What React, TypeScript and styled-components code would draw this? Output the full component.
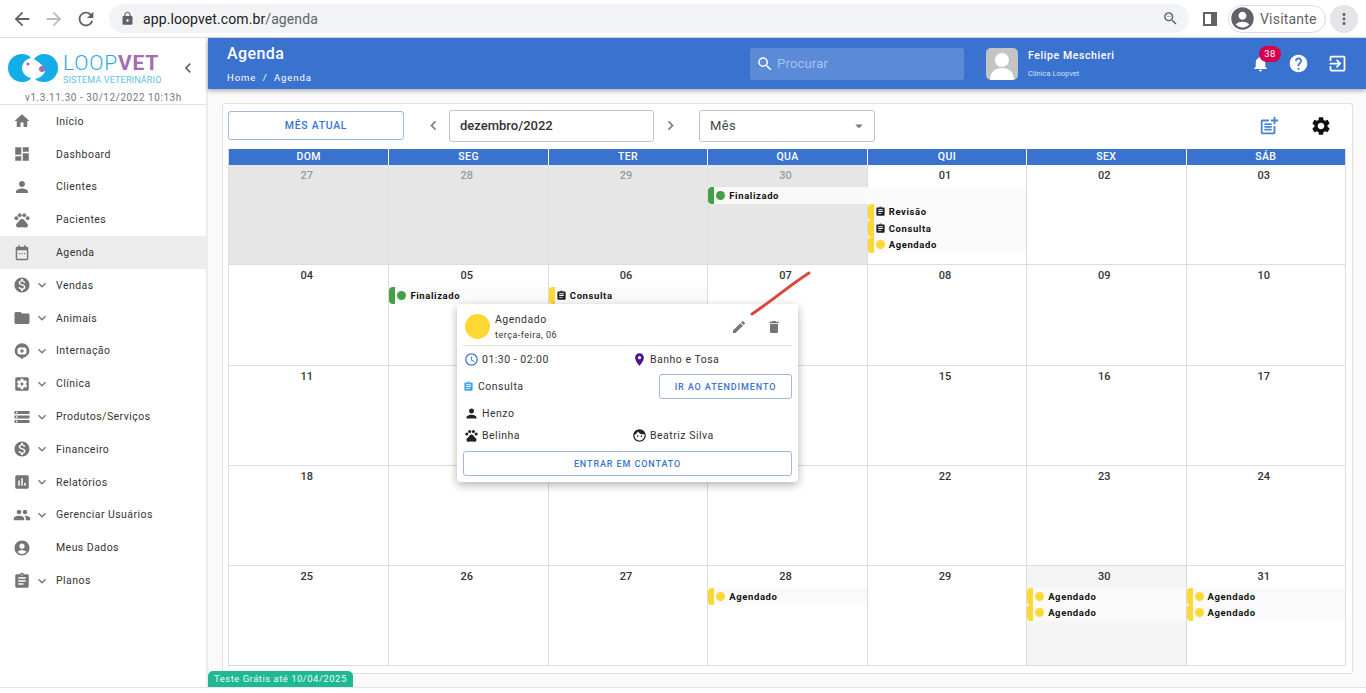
import React from 'react';
import styled, { createGlobalStyle } from 'styled-components';
import {
	MdHome, MdDashboard, MdPerson, MdPets, MdMonetizationOn, MdFolder, MdSettingsApplications,
	MdStorage, MdAssessment, MdPeople, MdAccountCircle, MdAssignment, MdExpandMore, MdChevronLeft,
	MdChevronRight, MdNotifications, MdHelp, MdPostAdd, MdSettings, MdEdit, MdDelete, MdAccessTime,
	MdPlace, MdSearch, MdLock, MdArrowBack, MdArrowForward, MdRefresh, MdZoomOut, MdMoreVert, MdFace,
	MdArrowDropDown, MdOutlineExitToApp,
} from 'react-icons/md';

const BLUE = '#3a73cf';

const GlobalStyle = createGlobalStyle`
	html, body { margin: 0; padding: 0; background: #fff; }
	body { font-family: Roboto, "Liberation Sans", sans-serif; color: #333; overflow: hidden; }
	* { box-sizing: border-box; }
`;

// a pin with a cross, the package has no such icon
const InternacaoIcon = () => (
	<svg width="20" height="20" viewBox="0 0 20 20">
		<path d="M10 1.5a8 8 0 0 1 1.4 15.9L10 19.5l-1.4-2.1A8 8 0 0 1 10 1.5z" fill="#757575" />
		<rect x="5" y="6" width="10" height="8" rx="2.5" fill="#fff" />
		<path d="M9.2 8h1.6v1.2H12v1.6h-1.2V12H9.2v-1.2H8V9.2h1.2z" fill="#757575" />
	</svg>
);

const AgendaIcon = () => (
	<svg width="20" height="20" viewBox="0 0 20 20">
		<path d="M6 1.5h1.6V3h4.8V1.5H14V3h1.5A1.5 1.5 0 0 1 17 4.5v12a1.5 1.5 0 0 1-1.5 1.5h-11A1.5 1.5 0 0 1 3 16.500v-12A1.500 1.500 0 0 1 4.500 3H6z" fill="#757575" />
		<rect x="4.600" y="7" width="10.800" height="9.400" fill="#ececec" />
		<path d="M6.500 10h1.400v1.400H6.500zM9.300 10h1.400v1.400H9.300zM12.100 10h1.400v1.400h-1.400z" fill="#757575" />
	</svg>
);

const Logo = () => (
	<svg width="50" height="28" viewBox="0 0 50 28">
		<path d="M14 0A14 14 0 1 0 14 28C19 28 22 26 23 24C18 23 14 19 14 14C14 9 18 5 23 4C21 1 18 0 14 0z" fill="#13aee8" />
		<path d="M36 0A14 14 0 1 1 36 28C32 28 29 27 27 25C32 24 36 21 37 17C36 12 31 8 26 5C28 2 32 0 36 0z" fill="#13aee8" />
		<circle cx="34" cy="15" r="3" fill="#a56cb0" />
		<circle cx="20" cy="10" r="1.6" fill="#a56cb0" />
	</svg>
);

const menu = [
	{ label: 'Início', icon: <MdHome /> },
	{ label: 'Dashboard', icon: <MdDashboard /> },
	{ label: 'Clientes', icon: <MdPerson /> },
	{ label: 'Pacientes', icon: <MdPets /> },
	{ label: 'Agenda', icon: <AgendaIcon />, active: true },
	{ label: 'Vendas', icon: <MdMonetizationOn />, more: true },
	{ label: 'Animais', icon: <MdFolder />, more: true },
	{ label: 'Internação', icon: <InternacaoIcon />, more: true },
	{ label: 'Clínica', icon: <MdSettingsApplications />, more: true },
	{ label: 'Produtos/Serviços', icon: <MdStorage />, more: true },
	{ label: 'Financeiro', icon: <MdMonetizationOn />, more: true },
	{ label: 'Relatórios', icon: <MdAssessment />, more: true },
	{ label: 'Gerenciar Usuários', icon: <MdPeople />, more: true },
	{ label: 'Meus Dados', icon: <MdAccountCircle /> },
	{ label: 'Planos', icon: <MdAssignment />, more: true },
];

type Ev = { col: number; row: number; span?: number; label: string; kind: 'green' | 'yellow' | 'doc' };
type Week = { days: string[]; muted?: number; today?: number; events: Ev[] };

const weeks: Week[] = [
	{
		days: ['27', '28', '29', '30', '01', '02', '03'],
		muted: 4,
		events: [
			{ col: 4, row: 2, span: 2, label: 'Finalizado', kind: 'green' },
			{ col: 5, row: 3, label: 'Revisão', kind: 'doc' },
			{ col: 5, row: 4, label: 'Consulta', kind: 'doc' },
			{ col: 5, row: 5, label: 'Agendado', kind: 'yellow' },
		],
	},
	{
		days: ['04', '05', '06', '07', '08', '09', '10'],
		events: [
			{ col: 2, row: 2, label: 'Finalizado', kind: 'green' },
			{ col: 3, row: 2, label: 'Consulta', kind: 'doc' },
		],
	},
	{ days: ['11', '12', '13', '14', '15', '16', '17'], events: [] },
	{ days: ['18', '19', '20', '21', '22', '23', '24'], events: [] },
	{
		days: ['25', '26', '27', '28', '29', '30', '31'],
		today: 5,
		events: [
			{ col: 4, row: 2, label: 'Agendado', kind: 'yellow' },
			{ col: 6, row: 2, label: 'Agendado', kind: 'yellow' },
			{ col: 6, row: 3, label: 'Agendado', kind: 'yellow' },
			{ col: 7, row: 2, label: 'Agendado', kind: 'yellow' },
			{ col: 7, row: 3, label: 'Agendado', kind: 'yellow' },
		],
	},
];

const weekDays = ['DOM', 'SEG', 'TER', 'QUA', 'QUI', 'SEX', 'SÁB'];

const App = () => (
	<Page>
		<GlobalStyle />
		<BrowserBar>
			<NavIcon><MdArrowBack /></NavIcon>
			<NavIcon $faded><MdArrowForward /></NavIcon>
			<NavIcon><MdRefresh /></NavIcon>
			<Omnibox>
				<LockIcon><MdLock /></LockIcon>
				<Url>app.loopvet.com.br<UrlPath>/agenda</UrlPath></Url>
				<ZoomIcon><MdZoomOut /></ZoomIcon>
			</Omnibox>
			<SideToggle />
			<GuestChip>
				<GuestAvatar><MdAccountCircle /></GuestAvatar>
				Visitante
			</GuestChip>
			<MoreButton><MdMoreVert /></MoreButton>
		</BrowserBar>
		<Body>
			<Sidebar>
				<LogoArea>
					<LogoRow>
						<Logo />
						<LogoText>
							<LogoName>LOOP<LogoVet>VET</LogoVet></LogoName>
							<LogoSub>SISTEMA VETERINÁRIO</LogoSub>
						</LogoText>
						<Collapse><MdChevronLeft /></Collapse>
					</LogoRow>
					<Version>v1.3.11.30 - 30/12/2022 10:13h</Version>
				</LogoArea>
				{menu.map((item) => (
					<MenuItem key={item.label} $active={item.active}>
						<MenuIcon>{item.icon}</MenuIcon>
						<MenuChevron>{item.more && <MdExpandMore />}</MenuChevron>
						<MenuLabel>{item.label}</MenuLabel>
					</MenuItem>
				))}
			</Sidebar>
			<Main>
				<Header>
					<TitleBlock>
						<Title>Agenda</Title>
						<Crumbs>Home&nbsp; /&nbsp; Agenda</Crumbs>
					</TitleBlock>
					<Search>
						<MdSearch />
						<SearchHint>Procurar</SearchHint>
					</Search>
					<UserAvatar>
						<svg width="32" height="32" viewBox="0 0 32 32">
							<circle cx="16" cy="12" r="7" fill="#fff" />
							<path d="M4 32c0-8 5-12 12-12s12 4 12 12z" fill="#fff" />
						</svg>
					</UserAvatar>
					<UserInfo>
						<UserName>Felipe Meschieri</UserName>
						<UserClinic>Clínica Loopvet</UserClinic>
					</UserInfo>
					<HeaderIcons>
						<Bell>
							<MdNotifications />
							<Badge>38</Badge>
						</Bell>
						<HeaderIcon><MdHelp /></HeaderIcon>
						<HeaderIcon><MdOutlineExitToApp /></HeaderIcon>
					</HeaderIcons>
				</Header>
				<Content>
					<Panel>
						<Toolbar>
							<CurrentButton>MÊS ATUAL</CurrentButton>
							<ToolArrow $side="left"><MdChevronLeft /></ToolArrow>
							<DateField>dezembro/2022</DateField>
							<ToolArrow $side="right"><MdChevronRight /></ToolArrow>
							<ViewSelect>Mês<MdArrowDropDown /></ViewSelect>
							<ToolIcons>
								<ToolIcon $blue><MdPostAdd /></ToolIcon>
								<ToolIcon><MdSettings /></ToolIcon>
							</ToolIcons>
						</Toolbar>
						<Calendar>
							<DaysHead>
								{weekDays.map((d) => <DayName key={d}>{d}</DayName>)}
							</DaysHead>
							{weeks.map((week) => (
								<WeekRow key={week.days[0]}>
									{week.days.map((day, i) => (
										<Cell
											key={day}
											$col={i + 1}
											$muted={week.muted !== undefined && i < week.muted}
											$today={week.today === i}
										>
											{day}
										</Cell>
									))}
									{week.events.map((ev) => (
										<EventBar key={`${ev.col}-${ev.row}`} $col={ev.col} $row={ev.row} $span={ev.span || 1}>
											<EventEdge $green={ev.kind === 'green'} />
											{ev.kind === 'doc' ? (
												<EventDoc><MdAssignment /></EventDoc>
											) : (
												<EventDot $green={ev.kind === 'green'} />
											)}
											<EventLabel>{ev.label}</EventLabel>
										</EventBar>
									))}
								</WeekRow>
							))}
							<Popover>
								<PopHead>
									<PopDot />
									<PopTitles>
										<PopTitle>Agendado</PopTitle>
										<PopDate>terça-feira, 06</PopDate>
									</PopTitles>
									<PopAction><MdEdit /></PopAction>
									<PopAction><MdDelete /></PopAction>
								</PopHead>
								<PopGrid>
									<PopCell><PopIcon $color="#3a73cf"><MdAccessTime /></PopIcon>01:30 - 02:00</PopCell>
									<PopCell><PopIcon $color="#4a148c"><MdPlace /></PopIcon>Banho e Tosa</PopCell>
									<PopCell><PopSmallIcon><MdAssignment /></PopSmallIcon>Consulta</PopCell>
									<PopCell><GoButton>IR AO ATENDIMENTO</GoButton></PopCell>
									<PopCell><PopIcon $color="#222"><MdPerson /></PopIcon>Henzo</PopCell>
									<PopCell />
									<PopCell><PopIcon $color="#222"><MdPets /></PopIcon>Belinha</PopCell>
									<PopCell><PopIcon $color="#222"><MdFace /></PopIcon>Beatriz Silva</PopCell>
								</PopGrid>
								<ContactButton>ENTRAR EM CONTATO</ContactButton>
							</Popover>
							<Scribble width="62" height="46" viewBox="0 0 62 46">
								<path d="M2 43C22 30 40 14 59 2" stroke="#d9483b" strokeWidth="3" strokeLinecap="round" fill="none" />
							</Scribble>
						</Calendar>
					</Panel>
				</Content>
				<TrialTag>Teste Grátis até 10/04/2025</TrialTag>
			</Main>
		</Body>
	</Page>
);

const Page = styled.div`
	width: 1366px;
	height: 693px;
	display: flex;
	flex-direction: column;
	overflow: hidden;
	padding-bottom: 5px;
`;

const BrowserBar = styled.div`
	height: 38px;
	flex: none;
	display: flex;
	align-items: center;
	padding-left: 11px;
	background: #fff;
	border-bottom: 1px solid #dadce0;
`;

const NavIcon = styled.div<{ $faded?: boolean }>`
	width: 22px;
	height: 22px;
	margin-right: 10px;
	font-size: 22px;
	display: flex;
	color: ${(p) => (p.$faded ? '#babcbe' : '#5f6368')};
`;

const Omnibox = styled.div`
	width: 1080px;
	height: 29px;
	margin-left: 2px;
	border-radius: 15px;
	background: #f1f3f4;
	display: flex;
	align-items: center;
	padding: 0 10px 0 11px;
`;

const LockIcon = styled.div`
	display: flex;
	font-size: 15px;
	color: #5f6368;
	margin-right: 8px;
`;

const Url = styled.div`
	flex: 1;
	font-size: 14px;
	letter-spacing: 0.1px;
	color: #202124;
`;

const UrlPath = styled.span`
	color: #5f6368;
`;

const ZoomIcon = styled.div`
	display: flex;
	font-size: 17px;
	color: #5f6368;
`;

const SideToggle = styled.div`
	width: 14px;
	height: 14px;
	margin-left: 14px;
	border: 2px solid #5f6368;
	border-right-width: 6px;
`;

const GuestChip = styled.div`
	width: 98px;
	height: 28px;
	margin-left: 11px;
	border: 1px solid #dadce0;
	border-radius: 14px;
	display: flex;
	align-items: center;
	gap: 4px;
	font-size: 14px;
	letter-spacing: 0.2px;
	color: #5f6368;
`;

const GuestAvatar = styled.div`
	display: flex;
	font-size: 27px;
	color: #5f6368;
`;

const MoreButton = styled.div`
	width: 28px;
	height: 28px;
	margin-left: 4px;
	border-radius: 50%;
	background: #e4e5e6;
	display: flex;
	align-items: center;
	justify-content: center;
	font-size: 18px;
	color: #5f6368;
`;

const Body = styled.div`
	flex: 1;
	display: flex;
	min-height: 0;
	border-bottom: 1px solid #e6e6e6;
`;

const Sidebar = styled.aside`
	width: 208px;
	flex: none;
	background: #fff;
	border-right: 2px solid #ececec;
`;

const LogoArea = styled.div`
	height: 67px;
	border-bottom: 1px solid #e3e3e3;
	padding: 13px 0 0 8px;
`;

const LogoRow = styled.div`
	display: flex;
	align-items: center;
`;

const LogoText = styled.div`
	margin-left: 5px;
	width: 100px;
`;

const LogoName = styled.div`
	font-size: 21px;
	line-height: 24px;
	font-weight: 300;
	letter-spacing: 0.8px;
	color: #2ba8df;
	white-space: nowrap;
`;

const LogoVet = styled.span`
	font-weight: 700;
	color: #a56cb0;
`;

const LogoSub = styled.div`
	font-size: 9px;
	line-height: 10px;
	color: #62c1e8;
	letter-spacing: 0.15px;
	white-space: nowrap;
`;

const Collapse = styled.div`
	display: flex;
	margin-left: 15px;
	font-size: 20px;
	color: #666;
`;

const Version = styled.div`
	margin-top: 7px;
	padding-left: 17px;
	font-size: 10px;
	line-height: 12px;
	letter-spacing: 0.55px;
	color: #777;
	white-space: nowrap;
`;

const MenuItem = styled.div<{ $active?: boolean }>`
	height: 32.8px;
	display: flex;
	align-items: center;
	padding-left: 13px;
	background: ${(p) => (p.$active ? '#ececec' : 'transparent')};
`;

const MenuIcon = styled.div`
	width: 18px;
	display: flex;
	justify-content: center;
	font-size: 20px;
	color: #757575;
`;

const MenuChevron = styled.div`
	width: 25px;
	padding-left: 3px;
	display: flex;
	font-size: 16px;
	color: #757575;
`;

const MenuLabel = styled.div`
	font-size: 10.5px;
	letter-spacing: 0.45px;
	color: #333;
	white-space: nowrap;
`;

const Main = styled.main`
	flex: 1;
	position: relative;
	background: #fafafa;
	display: flex;
	flex-direction: column;
	min-width: 0;
`;

const Header = styled.header`
	height: 51px;
	flex: none;
	background: ${BLUE};
	box-shadow: 0 2px 4px rgba(0, 0, 0, 0.3);
	display: flex;
	align-items: center;
	color: #fff;
	position: relative;
	z-index: 2;
`;

const TitleBlock = styled.div`
	width: 542px;
	padding-left: 19px;
`;

const Title = styled.div`
	font-size: 16px;
	line-height: 20px;
	font-weight: 500;
	letter-spacing: 0.4px;
`;

const Crumbs = styled.div`
	margin-top: 8px;
	font-size: 9.5px;
	line-height: 12px;
	letter-spacing: 0.9px;
`;

const Search = styled.div`
	width: 214px;
	height: 32px;
	border-radius: 3px;
	background: rgba(255, 255, 255, 0.17);
	display: flex;
	align-items: center;
	padding-left: 6px;
	font-size: 18px;
`;

const SearchHint = styled.span`
	margin-left: 3px;
	font-size: 13px;
	letter-spacing: 0.2px;
	color: #a6c2ee;
`;

const UserAvatar = styled.div`
	width: 32px;
	height: 32px;
	margin-left: 22px;
	border-radius: 5px;
	background: #c4c4c4;
	overflow: hidden;
	display: flex;
`;

const UserInfo = styled.div`
	margin-left: 10px;
	width: 223px;
`;

const UserName = styled.div`
	font-size: 10.5px;
	line-height: 13px;
	font-weight: 500;
	letter-spacing: 0.6px;
`;

const UserClinic = styled.div`
	margin-top: 7px;
	font-size: 7.5px;
	line-height: 10px;
	color: #cfe0f8;
`;

const HeaderIcons = styled.div`
	display: flex;
	align-items: center;
	gap: 18px;
`;

const Bell = styled.div`
	position: relative;
	display: flex;
	font-size: 19px;
`;

const Badge = styled.span`
	position: absolute;
	top: -8px;
	left: 8px;
	width: 22px;
	height: 16px;
	border-radius: 8px;
	background: #d6004f;
	font-size: 9.5px;
	line-height: 16px;
	letter-spacing: 0.4px;
	text-align: center;
`;

const HeaderIcon = styled.div`
	display: flex;
	font-size: 21px;
`;

const Content = styled.div`
	flex: 1;
	min-height: 0;
	padding: 14px 13px 14px 14px;
`;

const Panel = styled.section`
	height: 571px;
	background: #fff;
	border: 1px solid #e0e0e0;
	border-radius: 3px;
	padding: 0 6px 0 5px;
`;

const Toolbar = styled.div`
	height: 43px;
	margin-bottom: 2px;
	display: flex;
	align-items: center;
`;

const CurrentButton = styled.div`
	width: 176px;
	height: 29px;
	border: 1px solid #9db9e0;
	border-radius: 3px;
	color: ${BLUE};
	font-size: 10.5px;
	font-weight: 500;
	letter-spacing: 0.7px;
	display: flex;
	align-items: center;
	justify-content: center;
`;

const ToolArrow = styled.div<{ $side: 'left' | 'right' }>`
	width: 45px;
	display: flex;
	justify-content: ${(p) => (p.$side === 'left' ? 'flex-end' : 'flex-start')};
	padding: ${(p) => (p.$side === 'left' ? '0 6px 0 0' : '0 0 0 7px')};
	font-size: 19px;
	color: #777;
`;

const DateField = styled.div`
	width: 205px;
	height: 32px;
	border: 1px solid #c4c4c4;
	border-radius: 3px;
	padding-left: 10px;
	display: flex;
	align-items: center;
	font-size: 13px;
	font-weight: 500;
	color: #333;
`;

const ViewSelect = styled.div`
	width: 176px;
	height: 32px;
	border: 1px solid #c4c4c4;
	border-radius: 3px;
	padding: 0 6px 0 10px;
	display: flex;
	align-items: center;
	justify-content: space-between;
	font-size: 13px;
	letter-spacing: 0.4px;
	color: #444;
	svg { font-size: 18px; color: #777; }
`;

const ToolIcons = styled.div`
	margin-left: auto;
	margin-right: 14px;
	display: flex;
	gap: 30px;
`;

const ToolIcon = styled.div<{ $blue?: boolean }>`
	display: flex;
	font-size: 22px;
	color: ${(p) => (p.$blue ? '#4a82d6' : '#111')};
`;

const Calendar = styled.div`
	position: relative;
	border-left: 1px solid #dcdcdc;
	border-right: 1px solid #dcdcdc;
`;

const DaysHead = styled.div`
	height: 16px;
	display: grid;
	grid-template-columns: repeat(7, 1fr);
	background: ${BLUE};
`;

const DayName = styled.div`
	text-align: center;
	color: #fff;
	font-size: 10.5px;
	line-height: 16px;
	font-weight: 500;
	letter-spacing: 0.4px;
	border-left: 1px solid #fff;
	&:first-child { border-left: none; }
`;

const WeekRow = styled.div`
	height: 100.3px;
	display: grid;
	grid-template-columns: repeat(7, 1fr);
	grid-template-rows: 22px 16.5px 16.5px 16.5px 16.5px 1fr;
	border-bottom: 1px solid #dcdcdc;
`;

const Cell = styled.div<{ $col: number; $muted?: boolean; $today?: boolean }>`
	grid-column: ${(p) => p.$col};
	grid-row: 1 / -1;
	border-left: ${(p) => (p.$col === 1 ? 'none' : '1px solid #dcdcdc')};
	background: ${(p) => (p.$muted ? '#e6e6e6' : p.$today ? '#f5f5f5' : '#fff')};
	color: ${(p) => (p.$muted ? '#9a9a9a' : '#333')};
	font-size: 11px;
	font-weight: 500;
	text-align: center;
	padding: 4px 4px 0 0;
	line-height: 13px;
`;

const EventBar = styled.div<{ $col: number; $row: number; $span: number }>`
	grid-column: ${(p) => p.$col} / span ${(p) => p.$span};
	grid-row: ${(p) => p.$row};
	display: flex;
	align-items: center;
	background: rgba(250, 250, 250, 0.96);
	font-size: 9.5px;
	font-weight: 700;
	letter-spacing: 0.6px;
	color: #111;
	min-width: 0;
	margin-left: 1px;
`;

const EventEdge = styled.span<{ $green?: boolean }>`
	width: 6px;
	height: 100%;
	flex: none;
	border-radius: 4px 0 0 4px;
	background: ${(p) => (p.$green ? '#43a047' : '#fdd835')};
`;

const EventDot = styled.span<{ $green?: boolean }>`
	width: 9px;
	height: 9px;
	margin: 0 3px 0 2px;
	flex: none;
	border-radius: 50%;
	background: ${(p) => (p.$green ? '#43a047' : '#fdd835')};
`;

const EventDoc = styled.span`
	display: flex;
	margin: 0 2px 0 1px;
	font-size: 11px;
	color: #222;
`;

const EventLabel = styled.span`
	margin-left: 1px;
	white-space: nowrap;
`;

const Popover = styled.div`
	position: absolute;
	left: 228px;
	top: 155px;
	width: 341px;
	height: 178px;
	padding: 0 6px;
	background: #fff;
	border-radius: 4px;
	box-shadow: 0 3px 10px rgba(0, 0, 0, 0.3);
	font-size: 10.5px;
	letter-spacing: 0.5px;
	color: #333;
	z-index: 3;
`;

const PopHead = styled.div`
	height: 42px;
	display: flex;
	align-items: center;
	padding: 4px 1px 0 2px;
	border-bottom: 1px solid #e0e0e0;
`;

const PopDot = styled.div`
	width: 25px;
	height: 25px;
	border-radius: 50%;
	background: #fdd835;
	margin-right: 5px;
`;

const PopTitles = styled.div`
	flex: 1;
`;

const PopTitle = styled.div`
	font-size: 10.5px;
	line-height: 13px;
`;

const PopDate = styled.div`
	margin-top: 4px;
	font-size: 9px;
	line-height: 11px;
`;

const PopAction = styled.div`
	width: 35px;
	display: flex;
	justify-content: center;
	font-size: 16px;
	color: #757575;
`;

const PopGrid = styled.div`
	display: grid;
	grid-template-columns: 168px 1fr;
	grid-template-rows: 27px 27px 27px 17px;
`;

const PopCell = styled.div`
	display: flex;
	align-items: center;
	white-space: nowrap;
`;

const PopIcon = styled.span<{ $color: string }>`
	display: flex;
	width: 17px;
	justify-content: center;
	margin-right: 2px;
	font-size: 15px;
	color: ${(p) => p.$color};
`;

const PopSmallIcon = styled.span`
	display: flex;
	width: 15px;
	font-size: 11px;
	color: #42a5f5;
`;

const GoButton = styled.div`
	width: 133px;
	height: 25px;
	margin-left: 28px;
	border: 1px solid #9db9e0;
	border-radius: 3px;
	color: ${BLUE};
	font-size: 9px;
	font-weight: 500;
	letter-spacing: 0.9px;
	display: flex;
	align-items: center;
	justify-content: center;
`;

const ContactButton = styled.div`
	height: 25px;
	margin-top: 7px;
	border: 1px solid #9db9e0;
	border-radius: 3px;
	color: ${BLUE};
	font-size: 9px;
	font-weight: 500;
	letter-spacing: 0.9px;
	display: flex;
	align-items: center;
	justify-content: center;
`;

const Scribble = styled.svg`
	position: absolute;
	left: 521px;
	top: 122px;
	z-index: 4;
`;

const TrialTag = styled.div`
	position: absolute;
	left: 0;
	bottom: 0;
	width: 145px;
	height: 16px;
	border-radius: 5px 5px 0 0;
	background: #1fb892;
	color: #e8fff8;
	font-size: 9.5px;
	line-height: 16px;
	letter-spacing: 0.5px;
	padding-left: 6px;
	white-space: nowrap;
`;

export default App;
